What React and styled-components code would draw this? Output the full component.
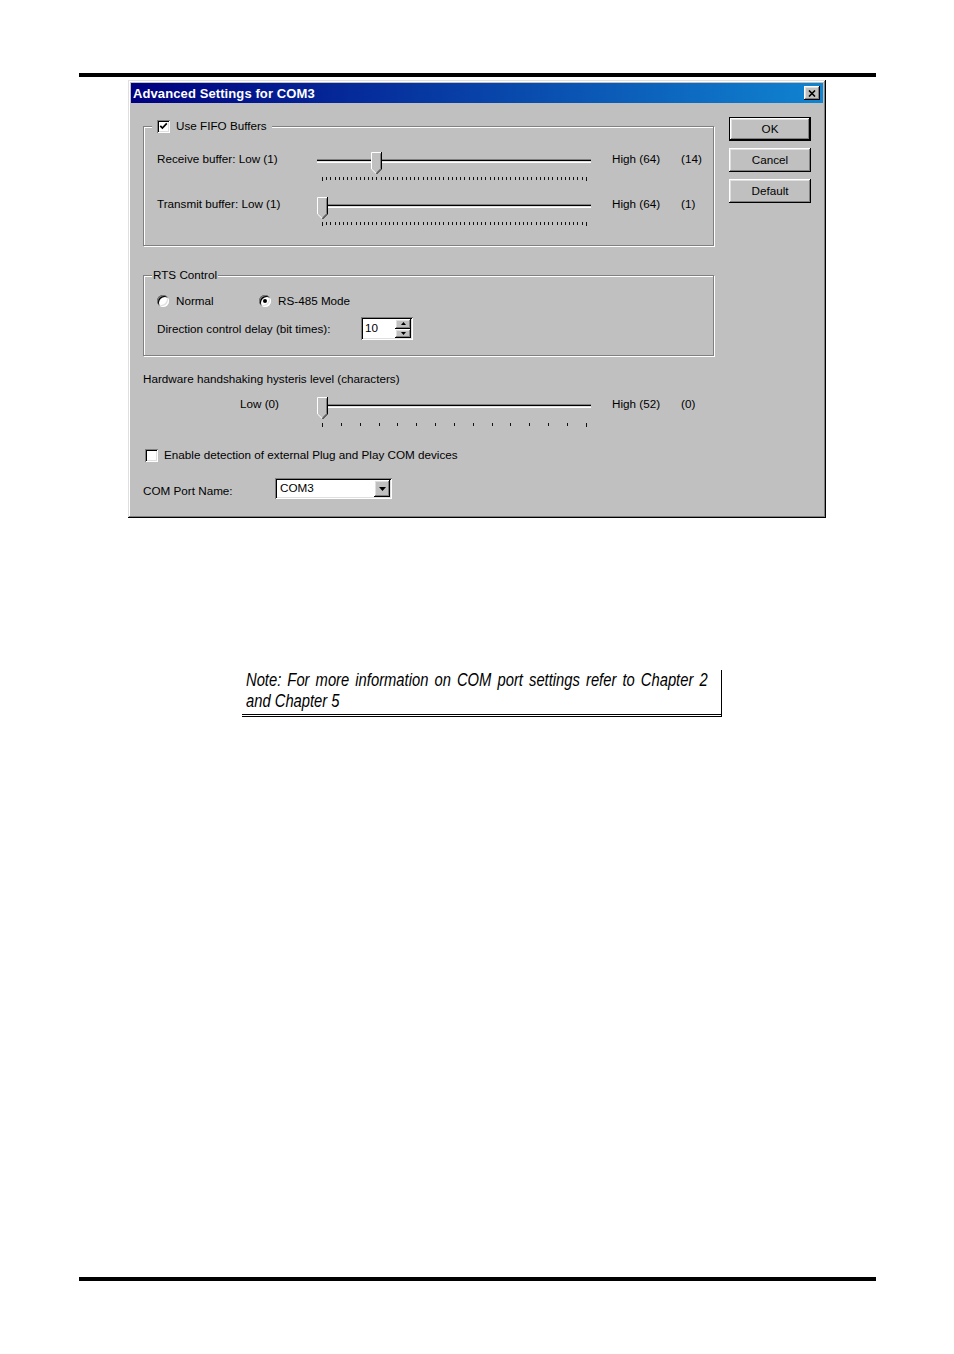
import React from 'react';
import styled, { createGlobalStyle, css } from 'styled-components';

const GlobalStyle = createGlobalStyle`
  html, body { margin: 0; padding: 0; background: #fff; }
  body { font-family: "Liberation Sans", Arial, sans-serif; }
`;

const raised = css`
  background: #c0c0c0;
  box-shadow: inset -1px -1px 0 #000, inset 1px 1px 0 #fff,
    inset -2px -2px 0 #808080, inset 2px 2px 0 #dfdfdf;
`;

const sunken = css`
  background: #fff;
  box-shadow: inset 1px 1px 0 #808080, inset -1px -1px 0 #fff,
    inset 2px 2px 0 #000, inset -2px -2px 0 #dfdfdf;
`;

const Page = styled.div`
  width: 954px;
  height: 1354px;
  padding-top: 73px;
  box-sizing: border-box;
  display: flex;
  flex-direction: column;
`;

const Rule = styled.div`
  flex: none;
  margin-left: 79px;
  margin-top: ${(p) => p.$top || 0}px;
  width: 797px;
  height: 4px;
  background: #000;
`;

const Dialog = styled.div`
  flex: none;
  margin: 3px 0 0 128px;
  width: 698px;
  height: 438px;
  box-sizing: border-box;
  padding: 3px;
  background: #c0c0c0;
  box-shadow: inset -1px -1px 0 #000, inset 1px 1px 0 #dfdfdf,
    inset -2px -2px 0 #808080, inset 2px 2px 0 #fff;
  display: flex;
  flex-direction: column;
  font-size: 11.7px;
  color: #000;
`;

const TitleBar = styled.div`
  height: 20px;
  display: flex;
  align-items: center;
  justify-content: space-between;
  padding: 0 3px 0 2px;
  background: linear-gradient(to right, #000080, #1084d0);
  color: #fff;
  font-weight: bold;
  font-size: 13px;
  letter-spacing: 0.1px;
`;

const CloseButton = styled.div`
  ${raised};
  width: 16px;
  height: 14px;
  display: grid;
  place-items: center;
`;

const Body = styled.div`
  flex: 1;
  display: flex;
  gap: 15px;
  padding: 14px 12px 0 12px;
`;

const LeftColumn = styled.div`
  width: 571px;
  display: flex;
  flex-direction: column;
`;

const ButtonColumn = styled.div`
  width: 82px;
  display: flex;
  flex-direction: column;
  gap: 7px;
`;

const PushButton = styled.div`
  ${raised};
  height: 24px;
  box-sizing: border-box;
  padding-bottom: 2px;
  display: grid;
  place-items: center;
  ${(p) => p.$default && css`border: 1px solid #000;`}
`;

const Group = styled.div`
  margin-top: ${(p) => p.$top}px;
  padding-bottom: ${(p) => p.$bottom}px;
  border: 1px solid #808080;
  box-shadow: 1px 1px 0 #fff, inset 1px 1px 0 #fff;
  display: flex;
  flex-direction: column;
`;

const GroupTitle = styled.div`
  align-self: flex-start;
  margin: -8px 0 0 8px;
  padding: 0 ${(p) => p.$padR}px 0 ${(p) => p.$padL}px;
  height: 14px;
  line-height: 14px;
  background: #c0c0c0;
  display: flex;
  align-items: center;
  gap: 6px;
`;

const GroupContent = styled.div`
  padding-left: 13px;
  display: flex;
  flex-direction: column;
`;

const SliderRow = styled.div`
  margin-top: ${(p) => p.$top}px;
  display: flex;
  align-items: flex-start;
`;

const RowLabel = styled.div`
  width: ${(p) => p.$width}px;
  padding-left: ${(p) => p.$indent || 0}px;
  box-sizing: border-box;
  padding-top: 1px;
  line-height: 14px;
  white-space: nowrap;
`;

const HighLabel = styled.div`
  margin-left: 21px;
  width: 69px;
  padding-top: 1px;
  line-height: 14px;
`;

const ValueLabel = styled.div`
  padding-top: 1px;
  line-height: 14px;
`;

const SliderBox = styled.div`
  position: relative;
  width: 274px;
  height: 30px;
`;

const Track = styled.div`
  margin-top: 8px;
  height: 4px;
  box-sizing: border-box;
  border-top: 1px solid #808080;
  border-bottom: 1px solid #fff;
  background: linear-gradient(#000 50%, #dfdfdf 50%);
`;

const ThumbWrap = styled.div`
  position: absolute;
  top: 1px;
  width: 11px;
  height: 22px;
  line-height: 0;
`;

const Ticks = styled.div`
  margin-top: ${(p) => p.$gap}px;
  padding: 0 4px 0 5px;
  display: flex;
  justify-content: space-between;
  align-items: flex-start;
`;

const Tick = styled.span`
  width: 1px;
  height: ${(p) => (p.$long ? 4 : 3)}px;
  background: #111;
`;

const Check = styled.span`
  ${sunken};
  flex: none;
  width: 13px;
  height: 13px;
  display: grid;
  place-items: center;
  margin-left: ${(p) => p.$offset || 0}px;
`;

const Line = styled.div`
  margin-top: ${(p) => p.$top}px;
  padding-left: ${(p) => p.$indent || 0}px;
  line-height: 14px;
  display: flex;
  align-items: center;
  gap: ${(p) => p.$gap || 0}px;
`;

const RadioOption = styled.div`
  width: ${(p) => (p.$width ? `${p.$width}px` : 'auto')};
  display: flex;
  align-items: center;
  gap: 7px;
`;

const Radio = styled.span`
  ${sunken};
  width: 12px;
  height: 12px;
  border-radius: 50%;
  display: grid;
  place-items: center;
  &::after {
    content: '';
    width: 4px;
    height: 4px;
    border-radius: 50%;
    background: ${(p) => (p.$checked ? '#000' : 'transparent')};
  }
`;

const FieldRow = styled.div`
  margin-top: ${(p) => p.$top}px;
  display: flex;
  align-items: center;
`;

const FieldLabel = styled.div`
  width: ${(p) => p.$width}px;
  margin-top: ${(p) => p.$shift || 0}px;
  line-height: 14px;
`;

const SpinBox = styled.div`
  ${sunken};
  width: 52px;
  height: 23px;
  box-sizing: border-box;
  padding: 2px;
  display: flex;
`;

const SpinValue = styled.div`
  flex: 1;
  padding-left: 2px;
  line-height: 17px;
`;

const SpinButtons = styled.div`
  width: 16px;
  display: flex;
  flex-direction: column;
`;

const SpinButton = styled.div`
  ${raised};
  flex: 1;
  display: grid;
  place-items: center;
  line-height: 0;
`;

const ComboBox = styled.div`
  ${sunken};
  width: 117px;
  height: 21px;
  box-sizing: border-box;
  padding: 2px;
  display: flex;
`;

const ComboValue = styled.div`
  flex: 1;
  padding-left: 3px;
  line-height: 16px;
`;

const ComboButton = styled.div`
  ${raised};
  width: 16px;
  display: grid;
  place-items: center;
  line-height: 0;
`;

const Note = styled.div`
  flex: none;
  margin: 152px 0 0 242px;
  width: 480px;
  box-sizing: border-box;
  padding: 0 13px 2px 4px;
  border-right: 1px solid #000;
  border-bottom: 3px double #000;
`;

/* no narrow face is installed, so the regular face is squeezed to Arial Narrow widths */
const NoteText = styled.div`
  width: 563px;
  margin-right: -101px;
  transform: scaleX(0.82);
  transform-origin: left top;
  font-family: "Liberation Sans", Arial, sans-serif;
  font-style: italic;
  font-size: 18px;
  line-height: 21px;
  text-align: justify;
`;

function Thumb({ ratio }) {
  return (
    <ThumbWrap style={{ left: `${Math.round(ratio * 263)}px` }}>
      <svg width="11" height="22" viewBox="0 0 11 22">
        <path d="M0 0H11V17L5.5 22L0 17Z" fill="#c0c0c0" />
        <path d="M0.5 17V0.5H10" stroke="#fff" fill="none" />
        <path d="M0.5 17L5.2 21.5" stroke="#fff" fill="none" />
        <path d="M10.5 0V17L5.5 22" stroke="#000" fill="none" />
        <path d="M9.5 1.5V16.6L5.5 20.6" stroke="#808080" fill="none" />
      </svg>
    </ThumbWrap>
  );
}

function Slider({ min, max, value, ticks, tickGap = 13 }) {
  return (
    <SliderBox>
      <Track />
      <Thumb ratio={(value - min) / (max - min)} />
      <Ticks $gap={tickGap}>
        {Array.from({ length: ticks }).map((_, i) => (
          <Tick key={i} $long={i === 0 || i === ticks - 1} />
        ))}
      </Ticks>
    </SliderBox>
  );
}

function CheckBox({ checked, offset }) {
  return (
    <Check $offset={offset}>
      {checked && (
        <svg width="9" height="9" viewBox="0 0 9 9">
          <path d="M1.3 3.8L3.4 6L7.8 1.4" stroke="#000" strokeWidth="1.7" fill="none" />
        </svg>
      )}
    </Check>
  );
}

const ArrowUp = () => (
  <svg width="5" height="3" viewBox="0 0 5 3">
    <path d="M0 3L2.5 0L5 3Z" fill="#000" />
  </svg>
);

const ArrowDown = ({ w = 5, h = 3 }) => (
  <svg width={w} height={h} viewBox={`0 0 ${w} ${h}`}>
    <path d={`M0 0H${w}L${w / 2} ${h}Z`} fill="#000" />
  </svg>
);

export default function App() {
  return (
    <>
      <GlobalStyle />
      <Page>
        <Rule />
        <Dialog>
          <TitleBar>
            <span>Advanced Settings for COM3</span>
            <CloseButton>
              <svg width="8" height="7" viewBox="0 0 8 7">
                <path d="M1 0.5L7 6.5M7 0.5L1 6.5" stroke="#000" strokeWidth="1.6" />
              </svg>
            </CloseButton>
          </TitleBar>
          <Body>
            <LeftColumn>
              <Group $top={9} $bottom={19}>
                <GroupTitle $padL={1} $padR={5}>
                  <CheckBox checked offset={4} />
                  <span>Use FIFO Buffers</span>
                </GroupTitle>
                <GroupContent>
                  <SliderRow $top={18}>
                    <RowLabel $width={160}>Receive buffer: Low (1)</RowLabel>
                    <Slider min={1} max={64} value={14} ticks={64} tickGap={14} />
                    <HighLabel>High (64)</HighLabel>
                    <ValueLabel>(14)</ValueLabel>
                  </SliderRow>
                  <SliderRow $top={15}>
                    <RowLabel $width={160}>Transmit buffer: Low (1)</RowLabel>
                    <Slider min={1} max={64} value={1} ticks={64} tickGap={14} />
                    <HighLabel>High (64)</HighLabel>
                    <ValueLabel>(1)</ValueLabel>
                  </SliderRow>
                </GroupContent>
              </Group>

              <Group $top={29} $bottom={15}>
                <GroupTitle $padL={1} $padR={1}>RTS Control</GroupTitle>
                <GroupContent>
                  <Line $top={12}>
                    <RadioOption $width={102}>
                      <Radio />
                      <span>Normal</span>
                    </RadioOption>
                    <RadioOption>
                      <Radio $checked />
                      <span>RS-485 Mode</span>
                    </RadioOption>
                  </Line>
                  <FieldRow $top={9}>
                    <FieldLabel $width={204} $shift={1}>Direction control delay (bit times):</FieldLabel>
                    <SpinBox>
                      <SpinValue>10</SpinValue>
                      <SpinButtons>
                        <SpinButton><ArrowUp /></SpinButton>
                        <SpinButton><ArrowDown /></SpinButton>
                      </SpinButtons>
                    </SpinBox>
                  </FieldRow>
                </GroupContent>
              </Group>

              <Line $top={16}>Hardware handshaking hysteris level (characters)</Line>
              <SliderRow $top={10}>
                <RowLabel $width={174} $indent={97}>Low (0)</RowLabel>
                <Slider min={0} max={52} value={0} ticks={15} tickGap={15} />
                <HighLabel>High (52)</HighLabel>
                <ValueLabel>(0)</ValueLabel>
              </SliderRow>

              <Line $top={22} $indent={2} $gap={6}>
                <CheckBox />
                <span>Enable detection of external Plug and Play COM devices</span>
              </Line>

              <FieldRow $top={16}>
                <FieldLabel $width={132} $shift={4}>COM Port Name:</FieldLabel>
                <ComboBox>
                  <ComboValue>COM3</ComboValue>
                  <ComboButton><ArrowDown w={7} h={4} /></ComboButton>
                </ComboBox>
              </FieldRow>
            </LeftColumn>

            <ButtonColumn>
              <PushButton $default>OK</PushButton>
              <PushButton>Cancel</PushButton>
              <PushButton>Default</PushButton>
            </ButtonColumn>
          </Body>
        </Dialog>

        <Note>
          <NoteText>
            Note: For more information on COM port settings refer to Chapter 2 and Chapter 5
          </NoteText>
        </Note>

        <Rule $top={560} />
      </Page>
    </>
  );
}
